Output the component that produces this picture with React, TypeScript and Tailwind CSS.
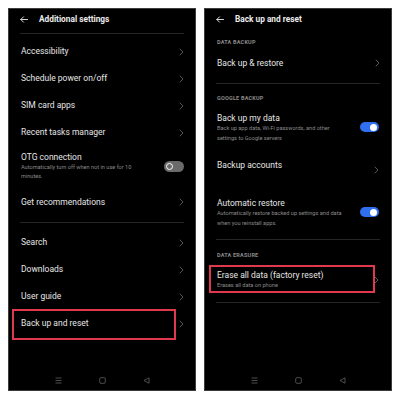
import React from "react";

const font = { fontFamily: "Roboto, 'Noto Sans', sans-serif" };

function BackArrow() {
  return (
    <svg width="8" height="7" viewBox="0 0 8 7" fill="none" stroke="#d8d8d8" strokeWidth="1" strokeLinecap="round">
      <path d="M7.5 3.5H0.8M3.5 0.8L0.8 3.5L3.5 6.2" />
    </svg>
  );
}

function Chevron() {
  return (
    <svg width="5" height="8" viewBox="0 0 5 8" fill="none" stroke="#555" strokeWidth="1" strokeLinecap="round">
      <path d="M1 1L4 4L1 7" />
    </svg>
  );
}

function NavBar() {
  return (
    <div className="mt-auto h-[20px] flex items-center justify-center gap-[37px]">
      <svg width="7" height="7" viewBox="0 0 7 7" stroke="#5f5f5f" strokeWidth="0.8">
        <path d="M0.5 1H6.5M0.5 3.5H6.5M0.5 6H6.5" />
      </svg>
      <svg width="7" height="7" viewBox="0 0 7 7" fill="none" stroke="#5f5f5f" strokeWidth="0.8">
        <rect x="0.7" y="0.7" width="5.6" height="5.6" rx="1.2" />
      </svg>
      <svg width="7" height="7" viewBox="0 0 7 7" fill="none" stroke="#5f5f5f" strokeWidth="0.8">
        <path d="M6 0.8L1 3.5L6 6.2Z" />
      </svg>
    </div>
  );
}

function Header({ title }: { title: string }) {
  return (
    <div className="h-[24px] pb-[4px] pl-[11px] flex items-center gap-[11px]">
      <BackArrow />
      <span className="text-[8.3px] font-bold text-[#ececec]">{title}</span>
    </div>
  );
}

function Row({ label, h = "h-[27px]" }: { label: string; h?: string }) {
  return (
    <div className={`${h} flex items-center justify-between pl-[12px] pr-[11px]`}>
      <span className="text-[8.5px] text-[#e6e6e6]">{label}</span>
      <Chevron />
    </div>
  );
}

function Divider({ className = "" }: { className?: string }) {
  return <div className={`mx-[11px] h-px bg-[#262626] ${className}`} />;
}

function Label({ text, className }: { text: string; className: string }) {
  return (
    <div className={`pl-[12px] flex items-center text-[5.5px] font-bold tracking-[0.2px] text-[#8a8a8a] ${className}`}>
      {text}
    </div>
  );
}

function OffToggle() {
  return (
    <div className="w-[20px] h-[11px] rounded-full bg-[#6a6a6a] flex items-center pl-[2px]">
      <div className="w-[7px] h-[7px] rounded-full border-[1.5px] border-white bg-[#6a6a6a]" />
    </div>
  );
}

function OnToggle() {
  return (
    <div className="w-[19px] h-[10px] rounded-full bg-[#2f6ff0] flex items-center justify-end pr-[2px]">
      <div className="w-[7px] h-[7px] rounded-full bg-white" />
    </div>
  );
}

function LeftPhone() {
  return (
    <div className="w-[188px] h-[383px] bg-black border border-[#3c3c3c] flex flex-col">
      <Header title="Additional settings" />
      <Divider />
      <div className="mt-[4px]">
        <Row label="Accessibility" />
        <Row label="Schedule power on/off" />
        <Row label="SIM card apps" />
        <Row label="Recent tasks manager" />
      </div>
      <div className="h-[43px] pt-[5px] pl-[12px] pr-[11px] flex justify-between">
        <div>
          <div className="text-[8.5px] leading-[12px] text-[#e6e6e6]">OTG connection</div>
          <div className="w-[132px] text-[5.6px] leading-[9px] text-[#8a8a8a]">
            Automatically turn off when not in use for 10 minutes.
          </div>
        </div>
        <div className="mt-[10px]">
          <OffToggle />
        </div>
      </div>
      <Row label="Get recommendations" h="h-[26px]" />
      <Divider className="mt-[7px]" />
      <div className="mt-[6px]">
        <Row label="Search" />
        <Row label="Downloads" />
        <Row label="User guide" />
        <div className="relative">
          <Row label="Back up and reset" />
          <div className="absolute -top-[1px] -bottom-[3px] left-[3px] right-[19px] border-2 border-[#e0394f]" />
        </div>
      </div>
      <NavBar />
    </div>
  );
}

function ToggleBlock({ title, sub, className = "" }: { title: string; sub: string; className?: string }) {
  return (
    <div className={`pl-[12px] pr-[12px] flex justify-between ${className}`}>
      <div>
        <div className="text-[8.5px] leading-[10px] text-[#e6e6e6]">{title}</div>
        <div className="w-[132px] text-[5.6px] leading-[10px] text-[#8a8a8a]">{sub}</div>
      </div>
      <div className="mt-[9px]">
        <OnToggle />
      </div>
    </div>
  );
}

function RightPhone() {
  return (
    <div className="w-[188px] h-[383px] bg-black border border-[#3c3c3c] flex flex-col">
      <Header title="Back up and reset" />
      <Label text="DATA BACKUP" className="h-[19px]" />
      <Row label="Back up & restore" h="h-[22px]" />
      <Divider className="mt-[9px]" />
      <Label text="GOOGLE BACKUP" className="h-[29px]" />
      <ToggleBlock
        title="Back up my data"
        sub="Back up app data, Wi-Fi passwords, and other settings to Google servers"
      />
      <div className="mt-[8px] h-[28px] pl-[12px] pr-[12px] flex justify-between items-center">
        <span className="text-[8.5px] text-[#e6e6e6]">Backup accounts</span>
        <div className="mt-[10px]">
          <Chevron />
        </div>
      </div>
      <ToggleBlock
        className="mt-[19px]"
        title="Automatic restore"
        sub="Automatically restore backed up settings and data when you reinstall apps."
      />
      <Divider className="mt-[11px]" />
      <Label text="DATA ERASURE" className="h-[25px] pt-[5px]" />
      <div className="relative h-[28px] pt-[5px] pl-[12px] pr-[12px] flex justify-between">
        <div>
          <div className="text-[8.5px] leading-[10px] text-[#e6e6e6]">Erase all data (factory reset)</div>
          <div className="text-[5.6px] leading-[10px] text-[#8a8a8a]">Erases all data on phone</div>
        </div>
        <div className="mt-[6px]">
          <Chevron />
        </div>
        <div className="absolute top-0 bottom-0 left-[4px] right-[16px] border-2 border-[#e0394f]" />
      </div>
      <Divider className="mt-[9px]" />
      <NavBar />
    </div>
  );
}

export default function App() {
  return (
    <div className="w-[400px] h-[400px] bg-white p-2 flex gap-2" style={font}>
      <LeftPhone />
      <RightPhone />
    </div>
  );
}
